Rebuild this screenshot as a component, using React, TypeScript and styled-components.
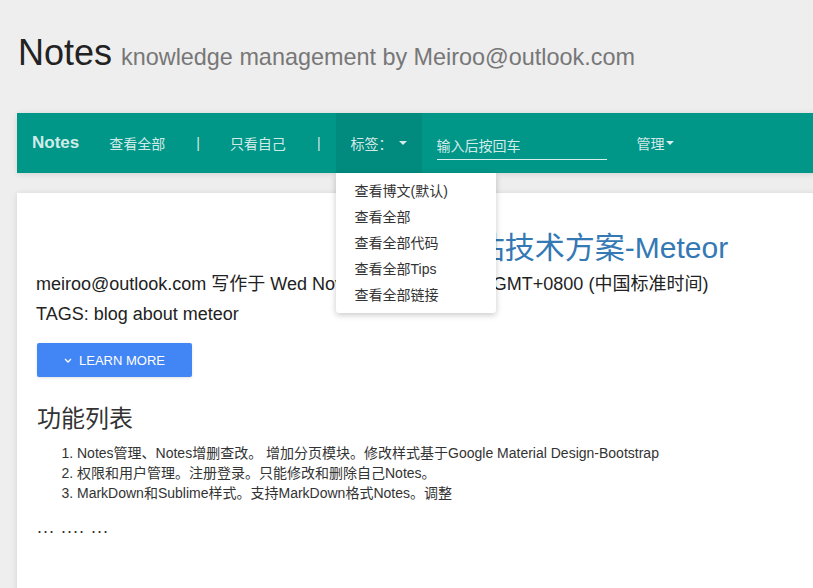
import React from "react";
import styled, { createGlobalStyle } from "styled-components";

const GlobalStyle = createGlobalStyle`
  html, body {
    margin: 0;
    padding: 0;
    background: #eeeeee;
    overflow: hidden;
  }
  body {
    font-family: "Liberation Sans", Arial, "Noto Sans CJK SC", sans-serif;
    color: #333;
  }
  * {
    box-sizing: border-box;
  }
`;

const Page = styled.div`
  width: 1080px;
  margin-left: 17px;
  padding-top: 33px;
`;

const Header = styled.h1`
  margin: 0 0 40px 1px;
  height: 40px;
  display: flex;
  align-items: baseline;
  font-size: 36px;
  line-height: 40px;
  font-weight: 400;
  color: #222;
  white-space: nowrap;
`;

const Subtitle = styled.small`
  font-size: 23.4px;
  color: #777;
  margin-left: 9px;
`;

const Navbar = styled.nav`
  height: 60px;
  background: #009688;
  display: flex;
  align-items: center;
  padding-left: 15px;
  box-shadow: 0 1px 6px rgba(0, 0, 0, 0.12);
`;

const Brand = styled.a`
  font-size: 17px;
  font-weight: 700;
  color: rgba(255, 255, 255, 0.84);
  padding-right: 15px;
`;

const NavItem = styled.div<{ $active?: boolean }>`
  position: relative;
  height: 60px;
  display: flex;
  align-items: center;
  padding: 0 15px;
  font-size: 14px;
  color: rgba(255, 255, 255, 0.84);
  background: ${(p) => (p.$active ? "rgba(0, 0, 0, 0.07)" : "transparent")};
  white-space: nowrap;
`;

const Separator = styled(NavItem)`
  padding: 0 15px 0 16px;
`;

const Caret = styled.span<{ $gap: number }>`
  display: inline-block;
  margin-left: ${(p) => p.$gap}px;
  width: 0;
  height: 0;
  border-left: 4px solid transparent;
  border-right: 4px solid transparent;
  border-top: 4px solid rgba(255, 255, 255, 0.84);
`;

const SearchInput = styled.div`
  width: 170px;
  margin: 4px 15px 0 15px;
  height: 30px;
  display: flex;
  align-items: center;
  border-bottom: 1px solid rgba(255, 255, 255, 0.84);
  font-size: 14px;
  color: rgba(255, 255, 255, 0.84);
`;

const Dropdown = styled.ul`
  position: absolute;
  top: 60px;
  left: 0;
  width: 160px;
  margin: 0;
  padding: 5px 0;
  list-style: none;
  background: #fff;
  border-radius: 0 0 3px 3px;
  box-shadow: 0 2px 6px rgba(0, 0, 0, 0.22);
  z-index: 10;
`;

const DropdownItem = styled.li`
  height: 26px;
  line-height: 26px;
  padding-left: 19px;
  font-size: 14px;
  color: #333;
`;

const Card = styled.div`
  margin-top: 20px;
  background: #fff;
  padding: 20px 20px 60px 19px;
  box-shadow: 0 1px 6px rgba(0, 0, 0, 0.12);
  min-height: 420px;
`;

const Title = styled.h2`
  margin: 15px 0 0;
  font-size: 30px;
  line-height: 40px;
  font-weight: 400;
  color: #3478b4;
  text-align: center;
`;

const Meta = styled.p`
  margin: 2px 0 0;
  font-size: 18px;
  line-height: 28px;
  color: #222;
  white-space: nowrap;
`;

const LearnMore = styled.button`
  margin-top: 15px;
  margin-left: 1px;
  width: 155px;
  height: 34px;
  border: none;
  border-radius: 2px;
  background: #4285f4;
  color: #fff;
  font-family: inherit;
  font-size: 13px;
  display: flex;
  align-items: center;
  justify-content: center;
  gap: 7px;
  box-shadow: 0 1px 3px rgba(0, 0, 0, 0.12);
`;

const SectionTitle = styled.h3`
  margin: 27px 0 0 1px;
  font-size: 24px;
  line-height: 30px;
  font-weight: 400;
  color: #333;
`;

const FeatureList = styled.ol`
  margin: 9px 0 0;
  padding-left: 41px;
  font-size: 14px;
  line-height: 20px;
  color: #333;
`;

const Ellipsis = styled.p`
  margin: 14px 0 0 1px;
  font-size: 18px;
  line-height: 20px;
  letter-spacing: 1px;
  color: #333;
`;

const features = [
  "Notes管理、Notes增删查改。 增加分页模块。修改样式基于Google Material Design-Bootstrap",
  "权限和用户管理。注册登录。只能修改和删除自己Notes。",
  "MarkDown和Sublime样式。支持MarkDown格式Notes。调整",
];

const tagMenu = ["查看博文(默认)", "查看全部", "查看全部代码", "查看全部Tips", "查看全部链接"];

export default function App() {
  return (
    <>
      <GlobalStyle />
      <Page>
        <Header>
          Notes<Subtitle>knowledge management by Meiroo@outlook.com</Subtitle>
        </Header>
        <Navbar>
          <Brand>Notes</Brand>
          <NavItem>查看全部</NavItem>
          <Separator>|</Separator>
          <NavItem>只看自己</NavItem>
          <Separator>|</Separator>
          <NavItem $active>
            标签：
            <Caret $gap={6} />
            <Dropdown>
              {tagMenu.map((t) => (
                <DropdownItem key={t}>{t}</DropdownItem>
              ))}
            </Dropdown>
          </NavItem>
          <SearchInput>输入后按回车</SearchInput>
          <NavItem>
            管理
            <Caret $gap={1} />
          </NavItem>
        </Navbar>
        <Card>
          <Title>博客网站技术方案-Meteor</Title>
          <Meta>
            meiroo@outlook.com 写作于 Wed Nov 04 2015 11:22:33 GMT+0800 (中国标准时间)
          </Meta>
          <Meta>TAGS: blog about meteor</Meta>
          <LearnMore>
            <svg width="8" height="5" viewBox="0 0 8 5">
              <path d="M1 1 L4 4 L7 1" stroke="#fff" strokeWidth="1.3" fill="none" />
            </svg>
            LEARN MORE
          </LearnMore>
          <SectionTitle>功能列表</SectionTitle>
          <FeatureList>
            {features.map((f) => (
              <li key={f}>{f}</li>
            ))}
          </FeatureList>
          <Ellipsis>... .... ...</Ellipsis>
        </Card>
      </Page>
    </>
  );
}
